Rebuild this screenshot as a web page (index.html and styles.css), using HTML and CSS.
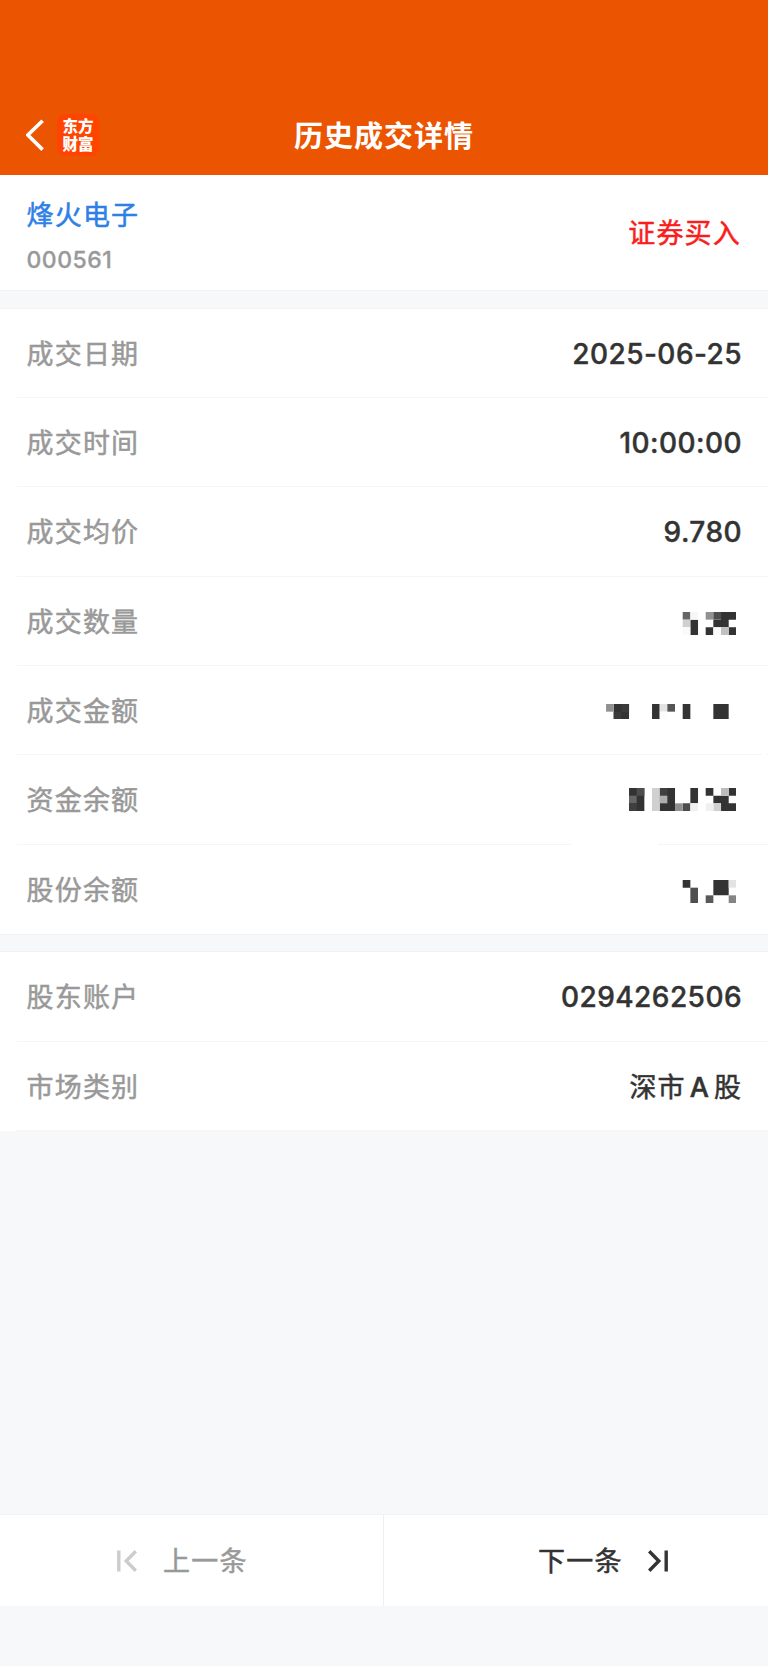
FILE: index.html
```html
<!DOCTYPE html>
<html lang="zh-CN">
<head>
<meta charset="utf-8">
<title>历史成交详情</title>
<link rel="stylesheet" href="styles.css">
</head>
<body>
<div class="page">
  <header class="header">
    <div class="header-left">
      <svg class="back" viewBox="0 0 18 32"><path d="M16.6 1.8 1.9 16 16.6 30.6" fill="none" stroke="#fff" stroke-width="3.6"/></svg>
      <div class="logo"><span>东方</span><span>财富</span></div>
    </div>
    <h1 class="title">历史成交详情</h1>
  </header>
  <section class="stock">
    <div>
      <div class="stock-name">烽火电子</div>
      <div class="stock-code">000561</div>
    </div>
    <div class="side">证券买入</div>
  </section>
  <div class="gap"></div>
  <section class="list">
    <div class="row"><span class="label">成交日期</span><span class="value date">2025-06-25</span></div>
    <div class="row"><span class="label">成交时间</span><span class="value time">10:00:00</span></div>
    <div class="row"><span class="label">成交均价</span><span class="value price">9.780</span></div>
    <div class="row"><span class="label">成交数量</span>
      <svg class="mosaic m-qty" viewBox="0 0 17 3">
        <path fill="#333" d="M11 1h1v2h-1zM15 0h2v1h-2zM14 1h2v1h-2zM13 2h1v1h-1zM16 2h1v1h-1z"/>
        <path fill="#666" d="M10 0h1v1h-1z"/><path fill="#f7f7f7" d="M11 0h1v1h-1z"/>
        <path fill="#d0d0d0" d="M10 1h1v1h-1z"/><path fill="#fafafa" d="M10 2h1v1h-1zM14 2h1v1h-1z"/>
        <path fill="#919191" d="M13 0h1v1h-1z"/><path fill="#4d4d4d" d="M14 0h1v1h-1z"/><path fill="#c0c0c0" d="M15 2h1v1h-1z"/>
      </svg></div>
    <div class="row row-notch"><span class="label">成交金额</span>
      <svg class="mosaic mosaic-short" viewBox="0 0 17 2">
        <path fill="#333" d="M1 0h2v2h-2zM6 0h1v2h-1zM10 0h1v2h-1zM14 0h2v2h-2z"/>
        <path fill="#3b3b3b" d="M2 0h1v1h-1zM1 1h1v1h-1z"/>
        <path fill="#919191" d="M0 0h1v1h-1z"/><path fill="#e3e3e3" d="M7 0h1v1h-1z"/>
        <path fill="#555" d="M8 0h1v1h-1z"/><path fill="#fcfcfc" d="M7 1h1v1h-1z"/>
      </svg></div>
    <div class="row row-break"><span class="label">资金余额</span>
      <svg class="mosaic" viewBox="0 0 17 3">
        <path fill="#333" d="M3 0h2v3h-2zM7 0h2v3h-2zM11 0h1v2h-1zM13 0h1v1h-1zM16 0h1v1h-1zM14 1h2v1h-2zM15 2h2v1h-2z"/>
        <path fill="#4d4d4d" d="M4 0h1v1h-1zM10 2h1v1h-1z"/><path fill="#666" d="M3 1h1v1h-1z"/>
        <path fill="#3f3f3f" d="M3 2h1v1h-1zM7 0h1v1h-1z"/><path fill="#d0d0d0" d="M6 0h1v3h-1zM14 2h1v1h-1z"/>
        <path fill="#adadad" d="M7 1h1v1h-1z"/><path fill="#919191" d="M9 2h1v1h-1z"/>
        <path fill="#f0f0f0" d="M11 2h1v1h-1zM13 2h1v1h-1z"/><path fill="#bcbcbc" d="M15 0h1v1h-1z"/>
      </svg></div>
    <div class="row row-last"><span class="label">股份余额</span>
      <svg class="mosaic m-share" viewBox="0 0 17 3">
        <path fill="#333" d="M10 0h1v1h-1zM14 0h2v2h-2z"/>
        <path fill="#4f4f4f" d="M11 1h1v2h-1z"/><path fill="#595959" d="M13 2h1v1h-1z"/>
        <path fill="#e3e3e3" d="M16 0h1v1h-1z"/><path fill="#848484" d="M16 2h1v1h-1z"/>
      </svg></div>
  </section>
  <div class="gap"></div>
  <section class="list">
    <div class="row"><span class="label">股东账户</span><span class="value account">0294262506</span></div>
    <div class="row"><span class="label">市场类别</span><span class="value market">深市<b>A</b>股</span></div>
  </section>
  <div class="spacer"></div>
  <nav class="pager">
    <div class="pager-item prev">
      <svg class="pager-icon" viewBox="0 0 20 22"><path d="M1.8.6v20.8M18.8 1.3 9.2 11l9.6 9.7" fill="none" stroke="#ccc" stroke-width="3.4"/></svg>
      <span>上一条</span>
    </div>
    <div class="pager-item next">
      <span>下一条</span>
      <svg class="pager-icon" viewBox="0 0 20 22"><path d="M18.2.6v20.8M1.2 1.3 10.8 11l-9.6 9.7" fill="none" stroke="#333" stroke-width="3.4"/></svg>
    </div>
  </nav>
</div>
</body>
</html>
```

FILE: styles.css
```css
* { box-sizing: border-box; }
body { margin: 0; background: #f6f8fa; font-family: Inter, "Noto Sans CJK SC", sans-serif; color: #333; }
.page { display: flex; flex-direction: column; height: 1666px; overflow: hidden; }
.header { flex: none; height: 174.5px; padding-top: 104px; background: #eb5502; display: grid; grid-template-columns: 1fr auto 1fr; align-items: start; }
.header-left { display: flex; align-items: center; padding: 9.5px 0 0 25.5px; gap: 13.6px; }
.back { width: 18px; height: 32px; }
.logo { width: 42px; height: 42px; border-radius: 8px; background: #ff4400; color: #fff; display: flex; flex-direction: column; align-items: center; justify-content: center; font: 900 15.5px/17.5px "Noto Sans CJK SC", sans-serif; }
.title { margin: 0; color: #fff; font: 700 29px/60px "Noto Sans CJK SC", sans-serif; letter-spacing: 1px; }
.stock { flex: none; height: 115.8px; padding: 21px 27px 0 26.5px; background: #fff; display: flex; justify-content: space-between; }
.stock-name, .side, .label, .value, .pager { font-size: 27px; letter-spacing: 1.2px; line-height: 40px; white-space: nowrap; -webkit-text-stroke: .5px currentColor; }
.stock-name { color: #2e80e6; }
.stock-code { color: #999; font-size: 23px; font-weight: 500; line-height: 30px; letter-spacing: .5px; margin-top: 9px; -webkit-text-stroke: .3px currentColor; }
.side { color: #f91d1d; padding-top: 18px; }
.gap { flex: none; height: 18.3px; background: #f6f8fa; border-top: 1px solid #f2f3f5; border-bottom: 1px solid #f1f2f4; }
.list { flex: none; background: #fff; }
.row { height: 89.35px; padding: 0 26px 0 26.5px; display: flex; align-items: center; justify-content: space-between; background: linear-gradient(#f5f5f6, #f5f5f6) 17px 100% / 100% 1px no-repeat; }
.row-notch { background: linear-gradient(90deg, #f5f5f6 744px, #fff 744px 749px, #f5f5f6 749px) 17px 100% / 100% 1px no-repeat; }
.row-break { background: linear-gradient(90deg, #f5f5f6 554px, #fff 554px 641px, #f5f5f6 641px) 17px 100% / 100% 1px no-repeat; }
.row-last { background: none; }
.label { color: #999; padding-top: 3px; }
.value { font-size: 28px; font-weight: 500; letter-spacing: .45px; padding-top: 1px; -webkit-text-stroke: .4px currentColor; }
.market { font-size: 27px; font-weight: 400; letter-spacing: 1.1px; padding-top: 3px; -webkit-text-stroke: .5px currentColor; }
.market b { font-weight: 500; margin: 0 4px; }
.mosaic { width: 130.4px; height: 23px; margin-right: 6px; }
.mosaic-short { height: 15.34px; margin-top: 2px; }
.m-qty { margin-top: 4px; }
.m-share { margin-top: 5px; }
.spacer { flex: 1; border-bottom: 1px solid #f1f2f4; }
.pager { flex: none; height: 90.5px; margin-bottom: 60.5px; background: #fff; display: grid; grid-template-columns: 1fr 1fr; }
.pager-item { display: flex; align-items: center; gap: 26px; }
.pager-item span { padding-top: 3px; }
.prev { padding-left: 117px; color: #999; border-right: 1px solid #eeeff1; }
.next { padding-left: 154px; gap: 25px; }
.pager-icon { width: 20px; height: 22px; margin-top: 1px; }
```
